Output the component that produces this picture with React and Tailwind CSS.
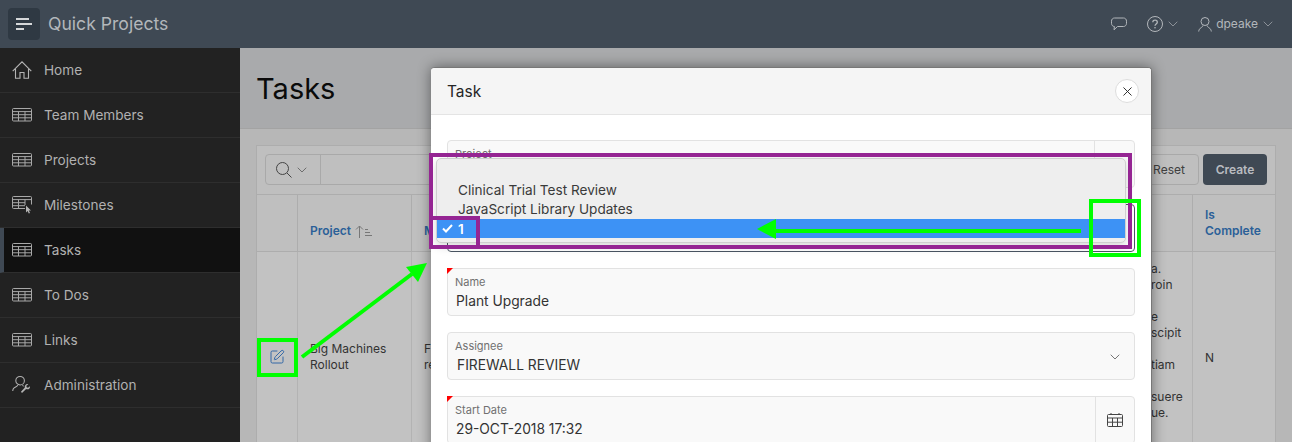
import React from "react";
import { ChevronDown, X, SquarePen } from "lucide-react";

const TableIcon = () => (
  <svg width="20" height="14" viewBox="0 0 20 14" fill="none" stroke="#a8a8a8" strokeWidth="1">
    <rect x="0.5" y="0.5" width="19" height="12.5" rx="1" />
    <path d="M0.5 3.6H19.5M0.5 6.7H19.5M0.5 9.8H19.5M6.5 3.6V13M13 3.6V13" />
  </svg>
);

const HomeIcon = () => (
  <svg width="20" height="18" viewBox="0 0 20 18" fill="none" stroke="#b4b4b4" strokeWidth="1.1">
    <path d="M0.700 10.200L10 0.800L19.300 10.200M3.500 8V17.300H8V11.500H12V17.300H16.500V8" />
  </svg>
);

const MilestoneIcon = () => (
  <svg width="20" height="18" viewBox="0 0 20 18" fill="none" stroke="#a8a8a8" strokeWidth="1">
    <path d="M13 12.5H1.5a1 1 0 0 1-1-1V1.5a1 1 0 0 1 1-1h17a1 1 0 0 1 1 1v7" />
    <path d="M0.5 3.6H19.5M0.5 6.7H13M0.5 9.7H13M6.5 3.6V12.5M13 3.6V9" />
    <path d="M14 9.5v7l1.6-1.6 1.2 2.6 1.2-.6-1.2-2.4h2.2z" fill="#b4b4b4" stroke="none" />
  </svg>
);

const AdminIcon = () => (
  <svg width="21" height="20" viewBox="0 0 21 20" fill="none" stroke="#b4b4b4" strokeWidth="1.1">
    <circle cx="8.5" cy="5.5" r="4.5" />
    <path d="M6 10c-.3 2-3.500 2-4.600 4-.5.900-.6 1.700-.6 2.300M11 10.300c.3.400.7.700 1.200 1" />
    <path d="M10.500 18.500l4.300-4.200c1.400.6 3 .1 3.700-1 .4-.7.500-1.400.3-2l-2 1.700-1.500-.7-.2-1.500 2-1.700c-1.200-.3-2.500.1-3.200 1.100-.6.800-.7 1.700-.4 2.500l-4.100 4.300z" fill="#b4b4b4" stroke="none" />
  </svg>
);

const nav = [
  ["Home", <HomeIcon key="h" />],
  ["Team Members", <TableIcon key="t" />],
  ["Projects", <TableIcon key="t" />],
  ["Milestones", <MilestoneIcon key="m" />],
  ["Tasks", <TableIcon key="t" />, true],
  ["To Dos", <TableIcon key="t" />],
  ["Links", <TableIcon key="t" />],
  ["Administration", <AdminIcon key="a" />],
];

const Corner = () => (
  <svg className="absolute -left-px -top-px" width="6" height="6" viewBox="0 0 6 6">
    <path d="M0 0H6L0 6Z" fill="#ff0000" />
  </svg>
);

function Field({ label, value, required, children, valueClass = "pl-px" }) {
  return (
    <div className="relative flex h-12 shrink-0 rounded-sm border border-[#e2e2e2] bg-[#f9f9f9]">
      {required && <Corner />}
      <div className="flex-1 pl-[7px] pt-[6px]">
        <div className="text-[11px] leading-[14px] text-[#707070]">{label}</div>
        <div className={"mt-[3px] text-[13.8px] leading-[18px] text-[#333333] " + valueClass}>{value}</div>
      </div>
      {children}
    </div>
  );
}

const rightLines = ["a.", "roin", "", "e", "scipit", "", "tiam", "", "suere", "ue."];

export default function App() {
  return (
    <div className="relative h-[442px] w-[1292px] overflow-hidden bg-[#b7b7b7] font-[Inter,sans-serif]">
      <header className="flex h-12 items-center justify-between bg-[#3f4954] pl-2 pr-4">
        <div className="flex items-center gap-2">
          <div className="flex h-8 w-8 flex-col justify-center gap-[3px] rounded-sm bg-[#2f3943] pl-2">
            <span className="h-[2px] w-[13px] bg-[#d5d7d9]" />
            <span className="h-[2px] w-4 bg-[#d5d7d9]" />
            <span className="h-[2px] w-2 bg-[#d5d7d9]" />
          </div>
          <span className="text-[17.6px] leading-6 text-[#b3b7bb]">Quick Projects</span>
        </div>
        <div className="flex items-center text-[#b3b7bb]">
          <svg width="16" height="14" viewBox="0 0 16 14" fill="none" stroke="currentColor" strokeWidth="1">
            <path d="M3.500 1H12.500C14.200 1 15.500 2.300 15.500 4.200V6.300C15.500 8.200 14.200 9.500 12.500 9.500H6.500L3 12.800L3.400 9.500C1.800 9.500 0.500 8.200 0.500 6.300V4.200C0.500 2.300 1.800 1 3.500 1Z" />
          </svg>
          <svg className="ml-[20px]" width="16" height="16" viewBox="0 0 16 16" fill="none" stroke="currentColor" strokeWidth="1">
            <circle cx="8" cy="8" r="7.500" />
            <path d="M5.800 6.200C5.800 3.400 10.300 3.400 10.300 6.200C10.300 8 8 8 8 9.800" strokeWidth="1.300" />
            <circle cx="8" cy="11.800" r="0.800" fill="currentColor" stroke="none" />
          </svg>
          <ChevronDown size={16} strokeWidth={1} className="ml-[2px]" />
          <svg className="ml-[17px]" width="14" height="15" viewBox="0 0 14 15" fill="none" stroke="currentColor" strokeWidth="1">
            <circle cx="7" cy="4.500" r="4" />
            <path d="M5 8.500C5 10.500 1 10.500 0.700 14.500M9 8.500C9 10.500 13 10.500 13.300 14.500" />
          </svg>
          <span className="ml-1 text-xs">dpeake</span>
          <ChevronDown size={16} strokeWidth={1} className="ml-[2px]" />
        </div>
      </header>

      <div className="flex h-[394px]">
        <aside className="w-60 shrink-0 bg-[#222222]">
          {nav.map(([name, icon, active]) => (
            <div
              key={name}
              className={
                "flex h-[45px] items-center border-b border-[#2e2e2e] text-[13.6px] text-[#b1b1b1] " +
                (active ? "border-l-4 border-l-[#3f4954] bg-[#111111]" : "")
              }
            >
              <span className={"flex w-5 justify-center " + (active ? "ml-2" : "ml-3")}>{icon}</span>
              <span className="ml-3">{name}</span>
            </div>
          ))}
        </aside>

        <main className="min-w-0 flex-1">
          <div className="flex h-[81px] items-center border-b border-[#a3a3a3] bg-[#a9aaac] pl-4 pt-[2px]">
            <h1 className="text-[29px] font-normal leading-10 text-[#0a0a0a]">Tasks</h1>
          </div>

          <div className="ml-4 mt-4 w-[1020px] border border-b-0 border-[#adadad] bg-[#bfbfbf]">
            <div className="flex h-[49px] items-center justify-between border-b border-[#adadad] px-2 pb-[1px]">
              <div className="flex h-[31px] w-[375px] rounded-sm border border-[#a9a9a9]">
                <div className="flex w-[55px] items-center justify-center gap-[2px] border-r border-[#a9a9a9] text-[#444444]">
                  <svg width="16" height="16" viewBox="0 0 16 16" fill="none" stroke="currentColor" strokeWidth="1">
                    <circle cx="6.500" cy="6.500" r="6" />
                    <path d="M11 11L15.500 15.500" />
                  </svg>
                  <ChevronDown size={16} strokeWidth={1} />
                </div>
              </div>
              <div className="flex items-center gap-1">
                <div className="flex h-[31px] w-[60px] items-center justify-center rounded-sm border border-[#a9a9a9] text-xs text-[#404040]">
                  Reset
                </div>
                <div className="flex h-[31px] w-16 items-center justify-center rounded-sm bg-[#3f4954] text-xs font-semibold text-[#b9bcc0]">
                  Create
                </div>
              </div>
            </div>

            <div className="grid h-[57px] grid-cols-[41px_114px_781px_83px] border-b border-[#adadad] text-xs font-semibold leading-4 text-[#2b5f98]">
              <div className="border-r border-[#adadad]" />
              <div className="flex items-end gap-1 border-r border-[#adadad] pb-[12px] pl-3">
                Project
                <svg className="mb-[1px]" width="17" height="13" viewBox="0 0 17 13" fill="none" stroke="#777777" strokeWidth="1">
                  <path d="M4.500 13V1M1 4.500L4.500 1L8 4.500M10 4.500H13M10 7.500H15M10 10.500H17" />
                </svg>
              </div>
              <div className="flex items-end border-r border-[#adadad] pb-[12px] pl-3">M</div>
              <div className="flex items-end pb-[12px] pl-3">
                <span>
                  Is
                  <br />
                  Complete
                </span>
              </div>
            </div>

            <div className="grid h-[190px] grid-cols-[41px_114px_781px_83px] bg-[#c2c2c2] text-xs leading-4 text-[#333333]">
              <div className="flex items-start justify-center border-r border-[#b3b3b3] pt-[97px]">
                <SquarePen size={16} strokeWidth={1.4} color="#2a62a5" />
              </div>
              <div className="border-r border-[#b3b3b3] pl-3 pt-[89px]">
                Big Machines
                <br />
                Rollout
              </div>
              <div className="relative border-r border-[#b3b3b3] pl-3 pt-[89px]">
                F<br />re
                <div className="absolute left-[739px] top-[9px] w-[42px] whitespace-nowrap">
                  {rightLines.map((t, i) => (
                    <div key={i} className="h-4">
                      {t}
                    </div>
                  ))}
                </div>
              </div>
              <div className="pl-3 pt-[98px]">N</div>
            </div>
          </div>
        </main>
      </div>

      {/* Modal dialog */}
      <div className="absolute left-[431px] top-[67px] h-[400px] w-[721px] overflow-hidden rounded-t-sm border-r border-t border-[#777777] bg-white shadow-[0_0_14px_rgba(0,0,0,0.45)]">
        <div className="flex h-[47px] items-center justify-between border-b border-[#e4e4e4] bg-[#f5f5f5] pl-4 pr-[12px]">
          <span className="pt-[2px] text-[15.5px] font-normal text-[#262626]">Task</span>
          <div className="flex h-6 w-6 items-center justify-center rounded-full border border-[#dddddd] bg-white text-[#262626]">
            <X size={15} strokeWidth={1.5} />
          </div>
        </div>
        <div className="flex flex-col gap-4 pl-4 pr-4 pt-[25px]">
          <div className="relative flex h-12 rounded-sm border border-[#e2e2e2] bg-[#f9f9f9]">
            <div className="flex-1 pl-[7px] pt-[6px] text-[11px] leading-[14px] text-[#707070]">Project</div>
            <div className="w-[40px] border-l border-[#e2e2e2]" />
          </div>
          <div className="h-12 w-[688px] rounded-sm border border-[#4a5563] bg-white" />
          <Field label="Name" value="Plant Upgrade" required />
          <Field label="Assignee" value="FIREWALL REVIEW" valueClass="pl-[2px]">
            <div className="flex w-[39px] items-center justify-center pt-[2px] text-[#555555]">
              <ChevronDown size={16} strokeWidth={1.2} />
            </div>
          </Field>
          <Field label="Start Date" value="29-OCT-2018 17:32" required>
            <div className="flex w-[39px] items-center justify-center border-l border-[#e2e2e2] text-[#444444]">
              <svg width="16" height="16" viewBox="0 0 16 16" fill="none" stroke="#444444" strokeWidth="1">
                <rect x="0.500" y="2.500" width="15" height="12" rx="1" />
                <path d="M0.500 6H15.500M0.500 10.200H15.500M5.500 6V14.500M10.500 6V14.500M4 1V3M12 1V3" />
              </svg>
            </div>
          </Field>
        </div>
      </div>

      {/* Native select popup */}
      <div className="absolute left-[436px] top-[158px] flex h-[85px] w-[690px] flex-col justify-end overflow-hidden rounded-[5px] border border-[#cfcfcf] bg-[#eeeeee] pb-1 text-[13.6px] leading-[18px] text-[#3a3a3a] shadow-[0_4px_10px_rgba(0,0,0,0.15)]">
        <div className="h-[19px] pl-[21px]">Clinical Trial Test Review</div>
        <div className="h-[19px] pl-[21px]">JavaScript Library Updates</div>
        <div className="flex h-[19px] items-center bg-[#3d92f5] font-semibold text-white">
          <svg className="ml-[5px] mr-[5px]" width="11" height="9" viewBox="0 0 11 9" fill="none" stroke="#ffffff" strokeWidth="2">
            <path d="M1 4.500L4 7.500L10 1" />
          </svg>
          1
        </div>
      </div>

      {/* Annotation boxes */}
      <div className="absolute left-[429px] top-[153px] h-[96px] w-[703px] border-4 border-[#952593]" />
      <div className="absolute left-[429px] top-[216px] h-[33px] w-[51px] border-4 border-[#952593]" />
      <div className="absolute left-[1089px] top-[199px] h-[58px] w-[52px] border-4 border-[#00ff00]" />
      <div className="absolute left-[257px] top-[338px] h-[39px] w-[41px] border-4 border-[#00ff00]" />

      <svg className="pointer-events-none absolute left-0 top-0" width="1292" height="442" viewBox="0 0 1292 442">
        <path d="M302 357L412 274" stroke="#00ff00" strokeWidth="4" />
        <path d="M427 263L406 267L418 282Z" fill="#00ff00" />
        <path d="M775 231H1081" stroke="#00ff00" strokeWidth="4" />
        <path d="M757 229L776 219V239Z" fill="#00ff00" />
      </svg>
    </div>
  );
}
